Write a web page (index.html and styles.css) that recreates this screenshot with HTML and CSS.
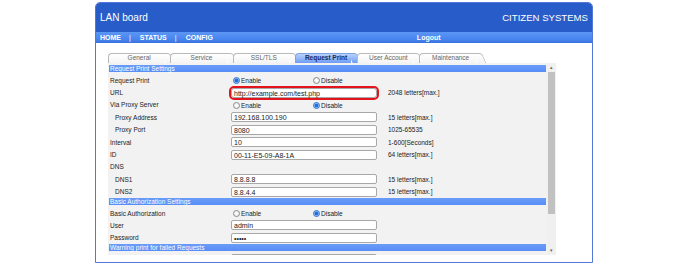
FILE: index.html
```html
<!DOCTYPE html>
<html lang="en">
<head>
  <meta charset="UTF-8">
  <title>LAN board</title>
  <link rel="stylesheet" href="styles.css">
</head>
<body>
  <div class="frame">
    <div class="head">
      <span class="title">LAN board</span>
      <span class="corp">CITIZEN SYSTEMS</span>
    </div>
    <div class="nav">
      <span>HOME</span><span class="sep">|</span><span>STATUS</span><span class="sep">|</span><span>CONFIG</span>
      <span class="logout">Logout</span>
    </div>
    <div class="main">
      <div class="tabs">
        <div class="tab">General</div>
        <div class="tab">Service</div>
        <div class="tab">SSL/TLS</div>
        <div class="tab active">Request Print</div>
        <div class="tab">User Account</div>
        <div class="tab">Maintenance</div>
      </div>
      <div class="panel">
        <div class="form">
          <div class="sec">Request Print Settings</div>
          <div class="row">
            <span class="lbl">Request Print</span>
            <span class="radios">
              <span class="opt"><i class="radio on"></i>Enable</span>
              <span class="opt"><i class="radio"></i>Disable</span>
            </span>
          </div>
          <div class="row">
            <span class="lbl">URL</span>
            <span class="val"><span class="field marked">http://example.com/test.php</span></span>
            <span class="note">2048 letters[max.]</span>
          </div>
          <div class="row">
            <span class="lbl">Via Proxy Server</span>
            <span class="radios">
              <span class="opt"><i class="radio"></i>Enable</span>
              <span class="opt"><i class="radio on"></i>Disable</span>
            </span>
          </div>
          <div class="row">
            <span class="lbl sub">Proxy Address</span>
            <span class="val"><span class="field">192.168.100.190</span></span>
            <span class="note">15 letters[max.]</span>
          </div>
          <div class="row">
            <span class="lbl sub">Proxy Port</span>
            <span class="val"><span class="field">8080</span></span>
            <span class="note">1025-65535</span>
          </div>
          <div class="row">
            <span class="lbl">Interval</span>
            <span class="val"><span class="field">10</span></span>
            <span class="note">1-600[Seconds]</span>
          </div>
          <div class="row">
            <span class="lbl">ID</span>
            <span class="val"><span class="field">00-11-E5-09-A8-1A</span></span>
            <span class="note">64 letters[max.]</span>
          </div>
          <div class="row">
            <span class="lbl">DNS</span>
          </div>
          <div class="row">
            <span class="lbl sub">DNS1</span>
            <span class="val"><span class="field">8.8.8.8</span></span>
            <span class="note">15 letters[max.]</span>
          </div>
          <div class="row">
            <span class="lbl sub">DNS2</span>
            <span class="val"><span class="field">8.8.4.4</span></span>
            <span class="note">15 letters[max.]</span>
          </div>
          <div class="sec">Basic Authorization Settings</div>
          <div class="row">
            <span class="lbl">Basic Authorization</span>
            <span class="radios">
              <span class="opt"><i class="radio"></i>Enable</span>
              <span class="opt"><i class="radio on"></i>Disable</span>
            </span>
          </div>
          <div class="row">
            <span class="lbl">User</span>
            <span class="val"><span class="field">admin</span></span>
          </div>
          <div class="row">
            <span class="lbl">Password</span>
            <span class="val"><span class="field">&bull;&bull;&bull;&bull;&bull;</span></span>
          </div>
          <div class="sec">Warning print for failed Requests</div>
          <div class="row">
            <span class="lbl"></span>
            <span class="val"><span class="field"></span></span>
          </div>
        </div>
        <div class="scroll">
          <div class="arrow">&#9652;</div>
          <div class="thumb"></div>
          <div class="track"></div>
          <div class="arrow">&#9662;</div>
        </div>
      </div>
    </div>
  </div>
</body>
</html>
```

FILE: styles.css
```css
* {
  box-sizing: border-box;
  margin: 0;
  padding: 0;
}
body {
  background: #fff;
  font-family: "Liberation Sans", Arial, sans-serif;
  color: #222;
}
.frame {
  margin: 2px 0 0 95px;
  width: 498px;
  height: 261px;
  border: 1px solid #5478d8;
  border-radius: 5px 5px 0 0;
  background: #fff;
  overflow: hidden;
  display: flex;
  flex-direction: column;
}
.head {
  height: 29px;
  flex: none;
  background: #275cc9;
  color: #fff;
  display: flex;
  align-items: center;
  justify-content: space-between;
  padding: 0 4px;
}
.title {
  font-size: 10px;
}
.corp {
  font-size: 9.6px;
}
.nav {
  height: 11px;
  flex: none;
  background: linear-gradient(#5c97f4, #4683ee 70%, #3a72dd);
  color: #fff;
  font-size: 7px;
  font-weight: bold;
  display: flex;
  align-items: center;
  padding-left: 4px;
}
.sep {
  margin: 0 9px 0 8px;
  font-weight: normal;
}
.logout {
  margin-left: 204px;
}
.main {
  padding: 10px 0 0 12px;
}
.tabs {
  display: flex;
  height: 10px;
}
/* tab body: straight left side, slanted right side */
.tab {
  position: relative;
  width: 62.3px;
  height: 10px;
  font-size: 6.5px;
  line-height: 9px;
  color: #666;
  text-align: center;
  z-index: 1;
}
.tab::before,
.tab::after {
  content: "";
  position: absolute;
  top: 0;
  bottom: 0;
  border: 1px solid #b9b9b9;
  border-bottom: none;
  background: linear-gradient(#fff, #f4f4f4);
  z-index: -1;
}
.tab::before {
  left: 0;
  right: 6px;
  border-right: none;
  border-radius: 4px 0 0 0;
}
.tab::after {
  right: 0;
  width: 8px;
  border-left: none;
  border-radius: 0 3px 0 0;
  transform: skewX(24deg);
  transform-origin: top left;
}
.tab.active {
  color: #1d2a55;
  font-weight: bold;
}
.tab.active::before,
.tab.active::after {
  background: linear-gradient(#b9d2fa, #6e9cf5);
  border-color: #7fa2e6;
}
.panel {
  width: 448px;
  height: 192px;
  background: #f2f2f2;
  display: flex;
  overflow: hidden;
  padding-left: 1px;
}
.form {
  width: 437px;
  padding-top: 2px;
  font-size: 6.5px;
}
.sec {
  height: 7px;
  line-height: 7px;
  background: linear-gradient(#6a9cf8, #578df6);
  color: #fff;
  padding-left: 1px;
  margin-bottom: 2px;
}
.row {
  height: 12.4px;
  display: flex;
  align-items: center;
}
.lbl {
  width: 122px;
  padding-left: 1px;
  flex: none;
}
.lbl.sub {
  padding-left: 6px;
}
.val {
  width: 157px;
  flex: none;
}
.field {
  display: block;
  width: 146px;
  height: 10px;
  line-height: 9px;
  border: 1px solid #a8a8a8;
  border-radius: 2px;
  background: #fff;
  font-size: 7px;
  padding-left: 2px;
  color: #1a1a1a;
}
.field.marked {
  outline: 2px solid #e3141b;
  outline-offset: 0;
  border-radius: 3px;
}
.radios {
  display: flex;
  padding-left: 2px;
}
.opt {
  width: 80px;
  display: flex;
  align-items: center;
  gap: 1px;
  font-size: 6.5px;
  padding-top: 1px;
}
.radio {
  width: 7px;
  height: 7px;
  border-radius: 50%;
  border: 1px solid #8a8a8a;
  background: radial-gradient(#fff, #e8e8e8);
}
.radio.on {
  border-color: #2d6fc8;
  background: radial-gradient(circle, #1f6fe0 0 1.6px, #9cc3f5 2.2px, #dbe9fb 3px);
}
.scroll {
  width: 9px;
  flex: none;
  margin-left: 1px;
  background: #f0f0f0;
  display: flex;
  flex-direction: column;
}
.arrow {
  height: 9px;
  font-size: 5px;
  line-height: 9px;
  text-align: center;
  color: #666;
}
.thumb {
  height: 142px;
  margin: 0 1px;
  background: #c1c1c1;
}
.track {
  flex: 1;
}
```
